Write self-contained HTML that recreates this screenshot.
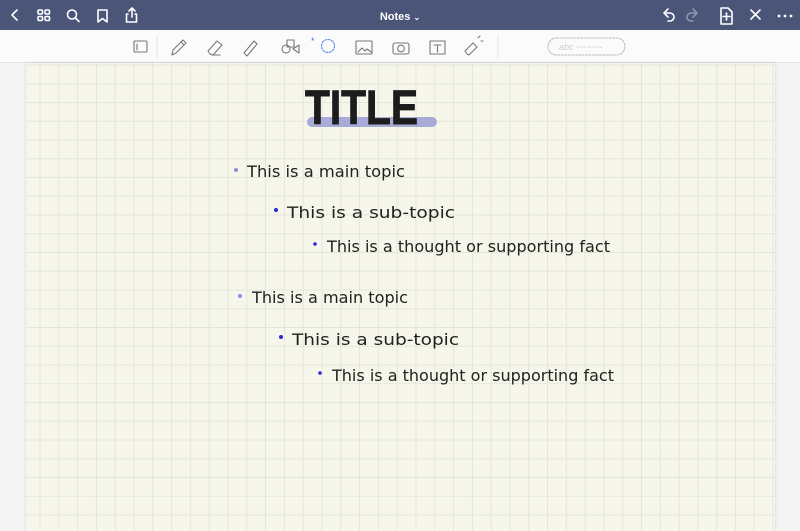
<!DOCTYPE html>
<html><head><style>
html,body{margin:0;padding:0;width:800px;height:531px;overflow:hidden;background:#f4f4f5;font-family:"Liberation Sans",sans-serif}
.top{position:absolute;left:0;top:0;width:800px;height:30px;background:#4a5578}
.tb{position:absolute;left:0;top:30px;width:800px;height:32px;background:#fbfbfb;border-bottom:1px solid #e6e6e6}
.paper{position:absolute;left:26px;top:63px;width:749px;height:468px;background-color:#f7f6ea;
background-image:linear-gradient(to right,#e5e6da 1.2px,transparent 1.2px),linear-gradient(to bottom,#e5e6da 1.2px,transparent 1.2px);
background-size:18.8px 18.75px;background-position:13.5px 1.5px;box-shadow:0 0 3px rgba(0,0,0,.15)}
svg{position:absolute;left:0;top:0}
</style></head><body>
<div class="top"></div>
<div class="tb"></div>
<div class="paper"></div>
<svg width="800" height="531" viewBox="0 0 800 531">
<g fill="none" stroke="#fff" stroke-width="1.6" stroke-linecap="round" stroke-linejoin="round">
<path d="M17 10 L12 15 L17 20"/>
<rect x="38" y="10" width="4.5" height="4" rx="1.2"/><rect x="45" y="10" width="4.5" height="4" rx="1.2"/>
<rect x="38" y="16.5" width="4.5" height="4" rx="1.2"/><rect x="45" y="16.5" width="4.5" height="4" rx="1.2"/>
<circle cx="72" cy="14.5" r="4.5"/><path d="M75.5 18 L79 21.5"/>
<path d="M98 10 h9 v12 l-4.5 -3.5 l-4.5 3.5 z"/>
<path d="M128 14 h-1.5 v8 h10 v-8 h-1.5 M132 17 v-9 M129 11 l3 -3 l3 3"/>
<path d="M668 11 l-4 4 l4 4 M664 15 h6 a4 4 0 0 1 0 8 h-2" transform="translate(0,-2)"/>
<path d="M701 11 l4 4 l-4 4 M705 15 h-6 a4 4 0 0 0 0 8 h2" stroke="#8d94ad" transform="translate(-8,-2)"/>
<path d="M721 8 h7 l4 4 v12 h-11 z M726.5 13 v7 M723 16.5 h7"/>
<path d="M751 10 l9 9 M760 10 l-9 9"/>
</g>
<g fill="#fff"><circle cx="779" cy="16" r="1.4"/><circle cx="785" cy="16" r="1.4"/><circle cx="791" cy="16" r="1.4"/></g>
<text x="400" y="20" fill="#fff" font-size="11" font-weight="bold" text-anchor="middle">Notes <tspan font-size="8">⌄</tspan></text>
<g fill="none" stroke="#777" stroke-width="1.1" stroke-linecap="round" stroke-linejoin="round">
<rect x="134" y="41" width="13" height="11" rx="1"/><path d="M137 44 v6"/>
<line x1="157" y1="36" x2="157" y2="58" stroke="#e5e5e5"/>
<path d="M172 55 l1 -5 l10 -10 l3 3 l-10 10 z M181 42 l3 3"/>
<path d="M210 54 l-2 -3 l9 -10 l5 4 l-9 10 z M212 55 h8"/>
<path d="M246 55 l-2 -2 l10 -12 l3 3 l-10 12 z"/>
<circle cx="286" cy="49" r="4"/><rect x="287" y="40" width="7" height="7"/><path d="M293 49 l6 -4 v8 z"/>
<circle cx="328" cy="46" r="6.5" stroke="#5b8be0" stroke-dasharray="2 1.4"/>
<rect x="356" y="41" width="16" height="13" rx="1"/><path d="M358 52 l4 -4 l3 3 l2 -2 l4 3"/>
<rect x="393" y="43" width="16" height="11" rx="2"/><circle cx="401" cy="48.5" r="3.3"/>
<rect x="430" y="41" width="15" height="13"/><path d="M434 45 h7 M437.5 45 v7"/>
<path d="M467 54 l-2 -3 l8 -8 l4 4 l-8 8 z M478 38 l2 -2 M481 41 l2 0"/>
<line x1="498" y1="36" x2="498" y2="58" stroke="#e5e5e5"/>
<rect x="548" y="38" width="77" height="17" rx="8.5" stroke="#bbb" stroke-dasharray="2 1.5"/>
</g>
<text x="559" y="50" fill="#ccc" font-size="9" font-style="italic">abc ~~~~~</text>
<text x="311" y="44" fill="#3b6fe0" font-size="9">*</text>
<rect x="307" y="117" width="130" height="10" rx="5" fill="#a8abd8"/>
<text x="305" y="124" font-size="48" font-weight="bold" fill="#1c1c1c" textLength="113" lengthAdjust="spacingAndGlyphs" stroke="#1c1c1c" stroke-width="1">TITLE</text>
<g font-size="16" fill="#222" font-family="'DejaVu Sans',sans-serif">
<circle cx="236" cy="170" r="2" fill="#8a8fe0"/>
<text x="247" y="177" textLength="158" lengthAdjust="spacingAndGlyphs">This is a main topic</text>
<circle cx="276" cy="210" r="2" fill="#2a2ad0"/>
<text x="287" y="218" textLength="168" lengthAdjust="spacingAndGlyphs">This is a sub-topic</text>
<circle cx="315" cy="244" r="1.8" fill="#2a2ad0"/>
<text x="327" y="252" textLength="283" lengthAdjust="spacingAndGlyphs">This is a thought or supporting fact</text>
<circle cx="240" cy="296" r="2" fill="#8a8fe0"/>
<text x="252" y="303" textLength="156" lengthAdjust="spacingAndGlyphs">This is a main topic</text>
<circle cx="281" cy="337" r="2" fill="#2a2ad0"/>
<text x="292" y="345" textLength="167" lengthAdjust="spacingAndGlyphs">This is a sub-topic</text>
<circle cx="320" cy="373" r="1.8" fill="#2a2ad0"/>
<text x="332" y="381" textLength="282" lengthAdjust="spacingAndGlyphs">This is a thought or supporting fact</text>
</g>
</svg>
</body></html>
